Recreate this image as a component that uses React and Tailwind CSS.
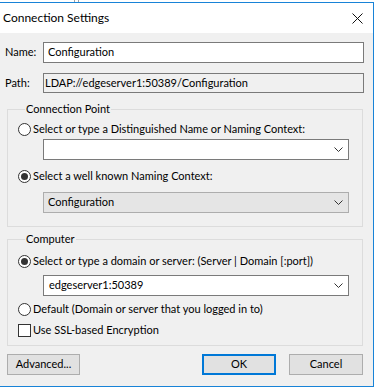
const FONT = { fontFamily: '"Segoe UI", Lato, "Noto Sans", sans-serif' };

function Chevron() {
    return (
        <svg width="9" height="5" viewBox="0 0 9 5" className="shrink-0">
            <polyline points="0.5,0.5 4.5,4.5 8.5,0.5" fill="none" stroke="#333" strokeWidth="1" />
        </svg>
    );
}

function CloseIcon() {
    return (
        <svg width="11" height="11" viewBox="0 0 11 11">
            <path d="M0.5 0.5 L10.5 10.5 M10.5 0.5 L0.5 10.5" stroke="#111" strokeWidth="1" fill="none" />
        </svg>
    );
}

function Radio({ checked, label }) {
    return (
        <div className="flex items-center h-[20px] gap-[2px]">
            <span className="w-[13px] h-[13px] rounded-full border border-[#333] bg-white flex items-center justify-center shrink-0">
                {checked && <span className="w-[7px] h-[7px] rounded-full bg-[#333]" />}
            </span>
            <span>{label}</span>
        </div>
    );
}

function Dropdown({ value, gray }) {
    return (
        <div
            className={
                gray
                    ? 'ml-[35px] w-[306px] h-[21px] border border-[#adadad] bg-[#e5e5e5] flex items-center pl-[4px] pr-[5px]'
                    : 'ml-[35px] w-[306px] h-[21px] border border-[#7a7a7a] bg-white flex items-center pl-[5px] pr-[5px]'
            }
        >
            <span className="flex-1">{value}</span>
            <Chevron />
        </div>
    );
}

function GroupBox({ title, className, children }) {
    return (
        <fieldset className={'ml-[7px] w-[356px] border border-[#dcdcdc] ' + className}>
            <legend className="ml-[7px] px-[1px] leading-[14px]">{title}</legend>
            {children}
        </fieldset>
    );
}

function Button({ children, primary, className }) {
    return (
        <button
            className={
                (primary ? 'border-2 border-[#0078d7] ' : 'border border-[#adadad] ') +
                'h-[21px] bg-[#e1e1e1] flex items-center justify-center ' + className
            }
        >
            {children}
        </button>
    );
}

export default function App() {
    return (
        <div className="relative w-[377px] h-[388px] bg-white text-[11px] text-black overflow-hidden" style={FONT}>
            {/* bits of the window behind */}
            <div className="absolute left-[74px] top-0 w-[1px] h-[2px] bg-[#a0a0a0]" />
            <div className="absolute left-[78px] top-0 w-[1px] h-[2px] bg-[#a0a0a0]" />

            <div className="mt-[2px] w-[374px] h-[385px] border-t border-r border-b border-[#1883d7] bg-[#f0f0f0] flex flex-col">
                <div className="h-[30px] bg-white flex items-center justify-between pl-[3px] pr-[10px]">
                    <span className="text-[12px]">Connection Settings</span>
                    <CloseIcon />
                </div>

                <div className="pt-[9px] pl-[5px] flex items-center">
                    <label className="w-[38px]">Name:</label>
                    <div className="w-[321px] h-[21px] border border-[#7a7a7a] bg-white flex items-center pl-[4px]">
                        Configuration
                    </div>
                </div>
                <div className="mt-[10px] pl-[5px] flex items-center">
                    <label className="w-[38px]">Path:</label>
                    <div className="w-[321px] h-[20px] border border-[#7a7a7a] bg-[#f0f0f0] flex items-center pl-[1px]">
                        LDAP://edgeserver1:50389/Configuration
                    </div>
                </div>

                <GroupBox title="Connection Point" className="mt-[9px] pl-[10px] pt-[3px] pb-[13px]">
                    <Radio label="Select or type a Distinguished Name or Naming Context:" />
                    <div className="-ml-[10px]">
                        <Dropdown value="" />
                    </div>
                    <div className="mt-[6px]">
                        <Radio checked label="Select a well known Naming Context:" />
                    </div>
                    <div className="-ml-[10px] mt-[6px]">
                        <Dropdown value="Configuration" gray />
                    </div>
                </GroupBox>

                <GroupBox title="Computer" className="mt-[5px] pl-[10px] pt-[5px] pb-[5px]">
                    <Radio checked label="Select or type a domain or server: (Server | Domain [:port])" />
                    <div className="-ml-[10px] mt-[4px]">
                        <Dropdown value="edgeserver1:50389" />
                    </div>
                    <div className="mt-[3px]">
                        <Radio label="Default (Domain or server that you logged in to)" />
                    </div>
                    <div className="mt-[1px] flex items-center h-[20px] gap-[2px]">
                        <span className="w-[13px] h-[13px] border border-[#333] bg-white shrink-0" />
                        <span>Use SSL-based Encryption</span>
                    </div>
                </GroupBox>

                <div className="mt-[8px] flex pr-[10px]">
                    <Button className="ml-[7px] w-[73px]">Advanced...</Button>
                    <Button primary className="ml-auto w-[74px]">OK</Button>
                    <Button className="ml-[13px] w-[74px]">Cancel</Button>
                </div>
            </div>
        </div>
    );
}
